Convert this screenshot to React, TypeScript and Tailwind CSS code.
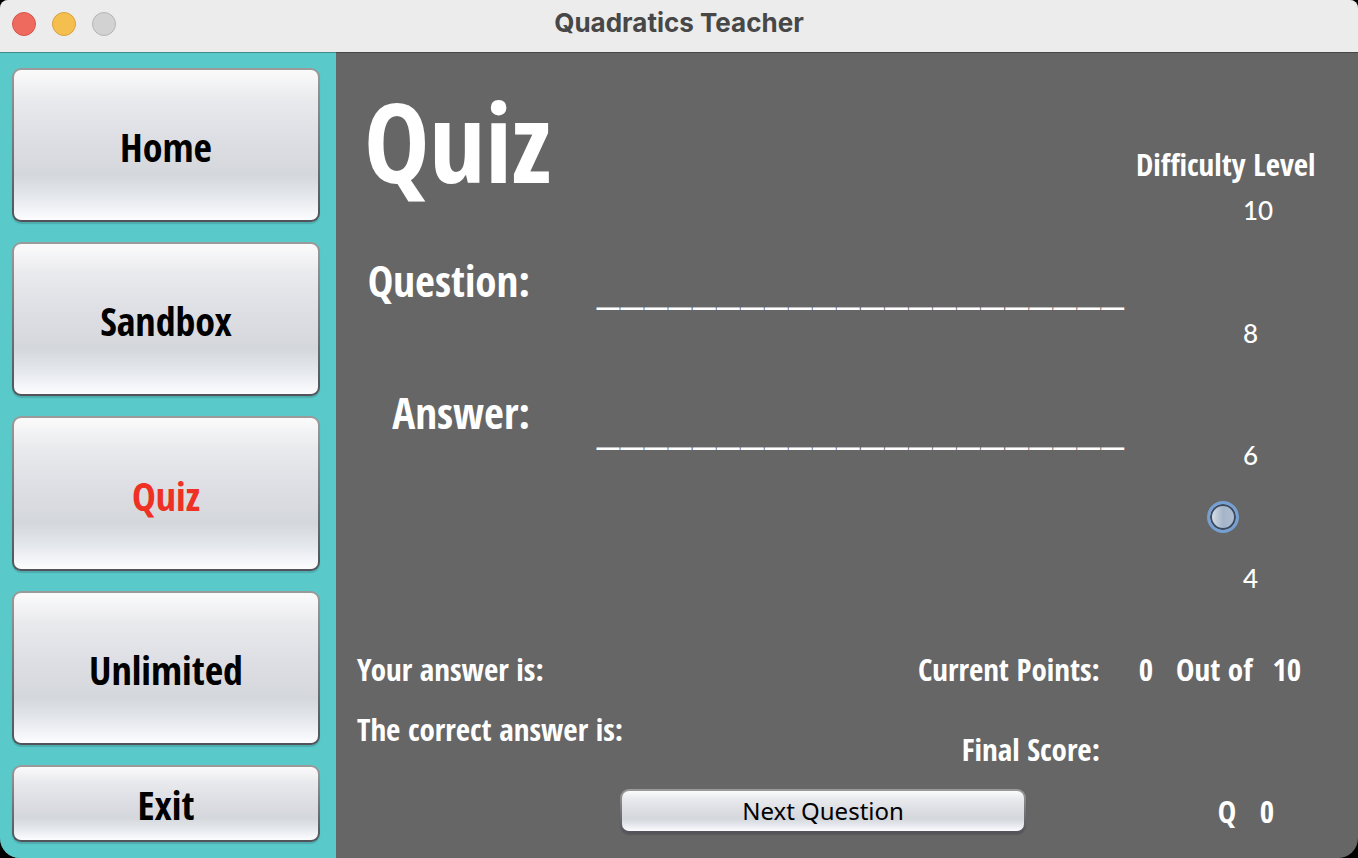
import { useState } from "react";

const METAL =
  "border-2 border-transparent rounded-[9px] [background:linear-gradient(#fbfbfc,#e9eaed_20%,#dedfe4_45%,#d4d7db_70%,#e5e8ed_85%,#fdfdff)_padding-box,linear-gradient(#9b9b9b,#52535a)_border-box] shadow-[0_2px_1px_rgba(0,0,0,0.14)] cursor-pointer";

const HAND = "font-['Open_Sans_Condensed','Open_Sans',sans-serif] font-bold";

const NAV = ["Home", "Sandbox", "Quiz", "Unlimited"];
const TICKS = [10, 8, 6, 4];
const BLANK = "_".repeat(22);

function TitleBar() {
  return (
    <header className="relative flex h-[52px] shrink-0 items-center justify-center bg-[#ececec] pb-1.5 shadow-[0_1px_0_rgba(0,0,0,0.3)]">
      <div className="absolute left-3 top-3 flex gap-4">
        <button aria-label="Close" className="size-6 rounded-full border border-[#d8564b] bg-[#ee6a5f]" />
        <button aria-label="Minimize" className="size-6 rounded-full border border-[#d9a23c] bg-[#f5bf4f]" />
        <button aria-label="Zoom" className="size-6 rounded-full border border-[#b5b5b5] bg-[#d2d2d2]" />
      </div>
      <h1 className="font-['Inter',sans-serif] text-[26px] font-bold leading-8 text-[#474747]">
        Quadratics Teacher
      </h1>
    </header>
  );
}

function Sidebar({ page, onSelect }: { page: string; onSelect: (p: string) => void }) {
  return (
    <nav className="grid w-[336px] shrink-0 grid-rows-[2fr_2fr_2fr_2fr_1fr] gap-5 bg-[#5ac9ca] pb-4 pl-3 pr-4 pt-4">
      {NAV.map((name) => (
        <button
          key={name}
          onClick={() => onSelect(name)}
          className={`${METAL} ${HAND} pt-1 text-[40px] leading-[48px] ${page === name ? "text-[#ee3124]" : "text-black"}`}
        >
          {name}
        </button>
      ))}
      <button className={`${METAL} ${HAND} pt-1 text-[40px] leading-[48px] text-black`}>Exit</button>
    </nav>
  );
}

function Difficulty() {
  const [level, setLevel] = useState(5);
  return (
    <section className="flex w-[222px] shrink-0 flex-col pt-[92px]">
      <label htmlFor="difficulty" className={`${HAND} text-[31px] leading-10`}>
        Difficulty Level
      </label>
      <div className="mt-2.5 flex h-[400px] gap-1 pl-[71px]">
        <input
          id="difficulty"
          type="range"
          min={4}
          max={10}
          value={level}
          onChange={(e) => setLevel(Number(e.target.value))}
          className="h-full w-8 appearance-none bg-transparent [direction:rtl] [writing-mode:vertical-lr] [&::-webkit-slider-runnable-track]:bg-transparent [&::-webkit-slider-thumb]:size-8 [&::-webkit-slider-thumb]:appearance-none [&::-webkit-slider-thumb]:rounded-full [&::-webkit-slider-thumb]:border-3 [&::-webkit-slider-thumb]:border-[#76a0d2] [&::-webkit-slider-thumb]:bg-linear-to-r [&::-webkit-slider-thumb]:from-[#dfe4ea] [&::-webkit-slider-thumb]:via-[#a5b4c8] [&::-webkit-slider-thumb]:to-[#b0bfd0] [&::-webkit-slider-thumb]:shadow-[inset_0_0_0_2px_#3b4a5e]"
        />
        <ol className="flex flex-col justify-between font-['Lato',sans-serif] text-[26px] font-medium leading-8">
          {TICKS.map((t) => (
            <li key={t}>{t}</li>
          ))}
        </ol>
      </div>
    </section>
  );
}

export default function App() {
  const [page, setPage] = useState("Quiz");
  return (
    <div className="min-h-screen bg-black">
      <div className="flex min-h-screen flex-col overflow-hidden rounded-b-[20px] rounded-t-lg bg-[#666] text-white">
        <TitleBar />
        <div className="flex grow">
          <Sidebar page={page} onSelect={setPage} />
          <main className="flex min-w-0 grow flex-col">
            <div className="flex grow">
              <section className="min-w-0 grow pl-7 pt-7">
                <h2 className={`${HAND} text-[110px] leading-[120px]`}>Quiz</h2>
                <div className="mt-[53px] flex items-start gap-[66px]">
                  <span className={`${HAND} w-[166px] text-right text-[43px] leading-[56px]`}>Question:</span>
                  <output className="font-['Noto_Sans_CJK_JP',sans-serif] text-[43px] leading-[64px]">{BLANK}</output>
                </div>
                <div className="mt-17 flex items-start gap-[66px]">
                  <label htmlFor="answer" className={`${HAND} w-[166px] text-right text-[43px] leading-[56px]`}>
                    Answer:
                  </label>
                  <input
                    id="answer"
                    placeholder={BLANK}
                    className="h-20 min-w-0 grow bg-transparent font-['Noto_Sans_CJK_JP',sans-serif] text-[43px] leading-[64px] outline-none placeholder:text-white placeholder:opacity-100"
                  />
                </div>
              </section>
              <Difficulty />
            </div>

            <div className={`${HAND} flex justify-between pl-[21px] text-[31px] leading-10`}>
              <div className="flex flex-col gap-5">
                <p>Your answer is:</p>
                <p>The correct answer is:</p>
              </div>
              <dl className="grid grid-cols-[auto_222px] gap-x-9 gap-y-10 text-right">
                <dt>Current Points:</dt>
                <dd className="flex gap-5 text-left">
                  <span className="w-5 text-center">0</span>
                  <span>Out of</span>
                  <span>10</span>
                </dd>
                <dt>Final Score:</dt>
                <dd />
              </dl>
            </div>

            <div className="mb-[25px] mt-5 grid grid-cols-[1fr_406px_1fr] items-center pl-[21px] pr-[69px]">
              <button className={`${METAL} col-start-2 h-11 font-['Noto_Sans',sans-serif] text-2xl text-black`}>
                Next Question
              </button>
              <p className={`${HAND} flex justify-end gap-5 pr-3 text-center text-[31px] leading-10`}>
                <span className="w-5">Q</span>
                <span className="w-5">0</span>
              </p>
            </div>
          </main>
        </div>
      </div>
    </div>
  );
}
